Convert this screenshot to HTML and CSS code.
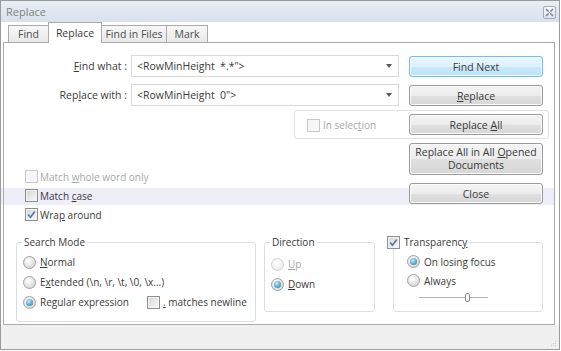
FILE: index.html
```html
<!DOCTYPE html>
<html>
<head>
<meta charset="utf-8">
<link rel="stylesheet" href="styles.css">
</head>
<body>
<div class="window">
  <div class="band"></div>
  <div class="titlebar">
    <span class="title">Replace</span>
    <span class="close"><svg width="9" height="9" viewBox="0 0 9 9"><path d="M1 1 L8 8 M8 1 L1 8" stroke="#7d8794" stroke-width="1.6" fill="none"/><rect x="3" y="3" width="3" height="3" fill="#eef2f6"/><path d="M3 3 L6 6 M6 3 L3 6" stroke="#7d8794" stroke-width="0.8"/></svg></span>
  </div>
  <div class="tabs">
    <div class="tab t-find">Find</div>
    <div class="tab t-rep active">Replace</div>
    <div class="tab t-fif">Find in Files</div>
    <div class="tab t-mark">Mark</div>
  </div>
  <div class="panel">
    <div class="fields">
      <div class="lbl"><span class="ak">F</span>ind what :</div>
      <div class="combo"><span class="val">&lt;RowMinHeight  *.*"&gt;</span><span class="arrow"></span></div>
      <button class="btn btn-def"><span>Find Next</span></button>
      <div class="lbl">Rep<span class="ak">l</span>ace with :</div>
      <div class="combo"><span class="val">&lt;RowMinHeight  0"&gt;</span><span class="arrow"></span></div>
      <button class="btn"><span><span class="ak">R</span>eplace</span></button>
    </div>
    <div class="selbox">
      <div class="opt dis"><span class="cb dis"></span><span>In selec<span class="ak">t</span>ion</span></div>
      <button class="btn btn-all"><span>Replace <span class="ak">A</span>ll</span></button>
    </div>
    <div class="mid">
      <div class="opts">
        <div class="opt dis"><span class="cb dis"></span><span>Match <span class="ak">w</span>hole word only</span></div>
        <div class="opt"><span class="cb"></span><span>Match <span class="ak">c</span>ase</span></div>
        <div class="opt"><span class="cb"><svg width="9" height="9" viewBox="0 0 9 9"><path d="M1.2 4.6 L3.5 7.2 L7.8 1.4" stroke="#5d76a3" stroke-width="1.7" fill="none"/></svg></span><span>Wra<span class="ak">p</span> around</span></div>
      </div>
      <div class="btncol">
        <button class="btn btn-tall"><span>Replace All in All <span class="ak">O</span>pened<br>Documents</span></button>
        <button class="btn"><span>Close</span></button>
      </div>
    </div>
    <div class="groups">
      <div class="group sm">
        <div class="legend">Search Mode</div>
        <div class="radios">
          <div class="ropt"><span class="rb"></span><span><span class="ak">N</span>ormal</span></div>
          <div class="ropt"><span class="rb"></span><span>E<span class="ak">x</span>tended (\n, \r, \t, \0, \x...)</span></div>
          <div class="ropt"><span class="rx-main"><span class="rb on"></span><span>Re<span class="ak">g</span>ular expression</span></span><span class="cb"></span><span class="nl"><span class="ak">.</span> matches newline</span></div>
        </div>
      </div>
      <div class="group dir">
        <div class="legend">Direction</div>
        <div class="radios">
          <div class="ropt dis"><span class="rb dis"></span><span><span class="ak">U</span>p</span></div>
          <div class="ropt"><span class="rb on"></span><span><span class="ak">D</span>own</span></div>
        </div>
      </div>
      <div class="group tr">
        <div class="legend tr-legend"><span class="cb"><svg width="9" height="9" viewBox="0 0 9 9"><path d="M1.2 4.6 L3.5 7.2 L7.8 1.4" stroke="#5d76a3" stroke-width="1.7" fill="none"/></svg></span><span>Transparenc<span class="ak">y</span></span></div>
        <div class="radios">
          <div class="ropt"><span class="rb on"></span><span>On losing focus</span></div>
          <div class="ropt"><span class="rb"></span><span>Always</span></div>
          <div class="slider"><span class="track"></span><span class="thumb"></span></div>
        </div>
      </div>
    </div>
  </div>
  <div class="status"><svg class="grip" width="6" height="6" viewBox="0 0 6 6"><g fill="#c8c8c8"><rect x="4" y="0" width="1" height="1"/><rect x="2" y="2" width="1" height="1"/><rect x="4" y="2" width="1" height="1"/><rect x="0" y="4" width="1" height="1"/><rect x="2" y="4" width="1" height="1"/><rect x="4" y="4" width="1" height="1"/></g></svg></div>
</div>
</body>
</html>
```
FILE: styles.css
```css
* { box-sizing: border-box; }
body {
  margin: 0;
  font-family: "Open Sans", "Noto Sans", sans-serif;
  font-size: 10px;
  color: #3a3a3a;
  background: #fff;
}
.window {
  position: relative;
  width: 560px;
  height: 350px;
  border: 1px solid #9b9b9b;
  background: #fff;
  display: flex;
  flex-direction: column;
}
.band {
  position: absolute;
  top: 187px;
  left: 0;
  width: 554px;
  height: 17px;
  background: #eeeef9;
  z-index: 0;
  pointer-events: none;
}
.titlebar {
  height: 21px;
  flex: none;
  display: flex;
  align-items: center;
  justify-content: space-between;
  padding: 0 3px 0 5px;
  background: linear-gradient(#e9eef5, #d8e2ec);
}
.title { font-size: 11px; color: #808080; }
.close {
  width: 13px;
  height: 13px;
  margin-top: 1px;
  border: 1px solid #a3adba;
  border-radius: 2px;
  background: linear-gradient(#f5f7fa, #dfe5ec);
  display: flex;
  align-items: center;
  justify-content: center;
}
.tabs {
  height: 20px;
  flex: none;
  display: flex;
  align-items: flex-end;
  padding-left: 7px;
  position: relative;
  z-index: 2;
}
.tab {
  height: 17px;
  border: 1px solid #ababab;
  border-bottom: none;
  background: linear-gradient(#f7f7f7, #e9e9e9);
  margin-left: -1px;
  display: flex;
  align-items: center;
  justify-content: center;
  color: #4d4d4d;
  font-size: 10.5px;
}
.t-find { width: 41px; margin-left: 0; }
.t-rep { width: 54px; }
.t-fif { width: 66px; }
.t-mark { width: 42px; }
.tab.active {
  height: 21px;
  margin-bottom: -1px;
  background: #fff;
  position: relative;
  z-index: 1;
  color: #3a3a3a;
}
.panel {
  height: 283px;
  flex: none;
  margin: 0 4px 0 2px;
  border: 1px solid #ababab;
  position: relative;
  z-index: 1;
}
.status {
  flex: 1;
  background: #f0f0f0;
  display: flex;
  justify-content: flex-end;
  align-items: flex-end;
  padding: 0 2px 2px 0;
  position: relative;
  z-index: 1;
}
.ak { text-decoration: underline; text-underline-offset: 1px; }

.fields {
  display: grid;
  grid-template-columns: 127px 278px 134px;
  grid-auto-rows: 22px;
  row-gap: 7px;
  padding-top: 12px;
}
.lbl {
  align-self: center;
  text-align: right;
  padding-right: 4px;
  font-size: 10.5px;
}
.combo {
  width: 268px;
  height: 22px;
  border: 1px solid #d9d9d9;
  background: #fff;
  display: flex;
  align-items: center;
  padding-left: 5px;
  font-size: 10.5px;
}
.val { white-space: pre; }
.arrow {
  margin-left: auto;
  margin-right: 6px;
  width: 0;
  height: 0;
  border-left: 3.5px solid transparent;
  border-right: 3.5px solid transparent;
  border-top: 4px solid #5a5a5a;
}
.btn {
  width: 134px;
  height: 21px;
  padding: 0;
  border: 1px solid #9a9a9a;
  border-radius: 3px;
  background: linear-gradient(#f4f4f4 0%, #ececec 50%, #e0e0e0 51%, #d6d6d6 100%);
  box-shadow: inset 0 0 0 1px #fbfbfb;
  font: inherit;
  font-size: 10.5px;
  color: #3a3a3a;
  display: flex;
  align-items: center;
  justify-content: center;
  text-align: center;
}
.fields .btn { align-self: end; }
.btn-def {
  border-color: #6ec0e6;
  background: linear-gradient(#eaf6fd 0%, #dcf1fc 50%, #c9e9fa 51%, #bde3f7 100%);
  box-shadow: inset 0 0 0 1px #f4fbfe;
}
.selbox {
  margin: 4px 0 0 290px;
  width: 255px;
  height: 29px;
  border: 1px solid #dedede;
  border-radius: 3px;
  display: flex;
  align-items: flex-start;
  padding: 3px 5px 0 12px;
}
.selbox .opt { align-self: center; margin-top: -2px; gap: 3px; }
.btn-all { margin-left: auto; }
.mid {
  display: flex;
  justify-content: space-between;
  margin-top: 4px;
  padding-right: 11px;
}
.opts {
  display: flex;
  flex-direction: column;
  padding: 24px 0 0 21px;
}
.opt {
  height: 19px;
  display: flex;
  align-items: center;
  gap: 2px;
  white-space: nowrap;
}
.dis { color: #a8a8a8; }
.btncol {
  width: 134px;
  display: flex;
  flex-direction: column;
  gap: 8px;
}
.btn-tall { height: 32px; line-height: 13px; }
.cb {
  width: 13px;
  height: 13px;
  flex: none;
  border: 1px solid #8f8f8f;
  background: linear-gradient(135deg, #d4d4d4, #fbfbfb);
  box-shadow: inset 0 0 0 1px #f2f2f2;
  display: flex;
  align-items: center;
  justify-content: center;
}
.cb.dis {
  border-color: #c8c8c8;
  background: #f6f6f6;
  box-shadow: none;
}
.rb {
  width: 13px;
  height: 13px;
  flex: none;
  border-radius: 50%;
  border: 1px solid #a2a2a2;
  background: radial-gradient(circle at 40% 35%, #ffffff, #d6d6d6 80%);
  position: relative;
}
.rb.dis {
  border-color: #d2d2d2;
  background: radial-gradient(circle at 40% 35%, #ffffff, #ececec 80%);
}
.rb.on::after {
  content: "";
  position: absolute;
  top: 2px;
  left: 2px;
  width: 7px;
  height: 7px;
  border-radius: 50%;
  background: radial-gradient(circle at 40% 35%, #c6ecfb, #4fa5cb 60%, #2b7ba3);
}
.groups {
  display: flex;
  align-items: flex-start;
  margin-top: 18px;
  padding-left: 12px;
}
.group {
  border: 1px solid #d8dee3;
  border-radius: 3px;
}
.sm { width: 240px; height: 80px; }
.dir { width: 111px; height: 70px; margin-left: 8px; }
.tr { width: 150px; height: 70px; margin-left: 18px; }
.legend {
  width: fit-content;
  height: 14px;
  line-height: 14px;
  margin: -8px 0 0 5px;
  padding: 0 2px;
  background: #fff;
  display: flex;
  align-items: center;
  white-space: nowrap;
}
.tr-legend { margin-left: -9px; gap: 4px; }
.radios {
  display: flex;
  flex-direction: column;
}
.sm .radios { padding: 3px 0 0 6px; }
.dir .radios { padding: 5px 0 0 6px; }
.tr .radios { padding: 3px 0 0 13px; }
.ropt {
  height: 20px;
  display: flex;
  align-items: center;
  gap: 4px;
  white-space: nowrap;
}
.tr .ropt { height: 19px; }
.rx-main {
  width: 120px;
  display: flex;
  align-items: center;
  gap: 4px;
}
.nl { margin-left: -1px; }
.slider {
  position: relative;
  width: 69px;
  height: 14px;
  margin-left: 12px;
}
.track {
  position: absolute;
  left: 0;
  right: 0;
  top: 7px;
  height: 1px;
  background: #b4b4b4;
}
.thumb {
  position: absolute;
  left: 46px;
  top: 3px;
  width: 5px;
  height: 9px;
  border: 1px solid #8c8c8c;
  border-radius: 2px;
  background: #fafafa;
}
.grip { display: block; }
```
